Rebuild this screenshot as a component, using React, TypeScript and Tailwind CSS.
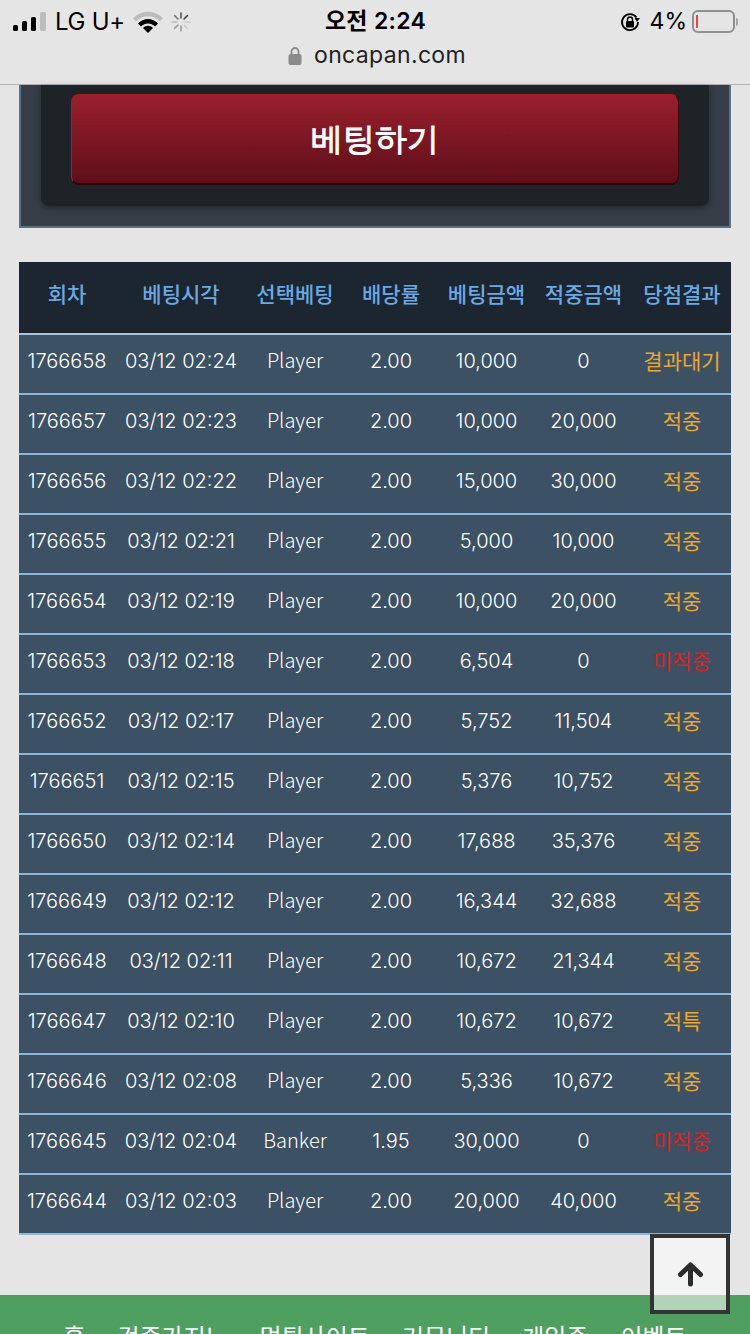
const rows = [
  ['1766658', '03/12 02:24', 'Player', '2.00', '10,000', '0', '결과대기'],
  ['1766657', '03/12 02:23', 'Player', '2.00', '10,000', '20,000', '적중'],
  ['1766656', '03/12 02:22', 'Player', '2.00', '15,000', '30,000', '적중'],
  ['1766655', '03/12 02:21', 'Player', '2.00', '5,000', '10,000', '적중'],
  ['1766654', '03/12 02:19', 'Player', '2.00', '10,000', '20,000', '적중'],
  ['1766653', '03/12 02:18', 'Player', '2.00', '6,504', '0', '미적중'],
  ['1766652', '03/12 02:17', 'Player', '2.00', '5,752', '11,504', '적중'],
  ['1766651', '03/12 02:15', 'Player', '2.00', '5,376', '10,752', '적중'],
  ['1766650', '03/12 02:14', 'Player', '2.00', '17,688', '35,376', '적중'],
  ['1766649', '03/12 02:12', 'Player', '2.00', '16,344', '32,688', '적중'],
  ['1766648', '03/12 02:11', 'Player', '2.00', '10,672', '21,344', '적중'],
  ['1766647', '03/12 02:10', 'Player', '2.00', '10,672', '10,672', '적특'],
  ['1766646', '03/12 02:08', 'Player', '2.00', '5,336', '10,672', '적중'],
  ['1766645', '03/12 02:04', 'Banker', '1.95', '30,000', '0', '미적중'],
  ['1766644', '03/12 02:03', 'Player', '2.00', '20,000', '40,000', '적중'],
];

const headers = ['회차', '베팅시각', '선택베팅', '배당률', '베팅금액', '적중금액', '당첨결과'];

function StatusBar() {
  return (
    <div className="h-[85px] shrink-0 border-b border-[#b3b3b3] bg-[#e5e5e5] font-['Inter','Noto_Sans_CJK_KR',sans-serif] text-black">
      <div className="flex h-[42px] items-center justify-between pl-[13px] pr-[12px] pt-[1px]">
        <div className="flex w-[220px] items-center">
          {/* signal */}
          <svg width="34" height="20" viewBox="0 0 34 20">
            <rect x="0" y="13" width="5" height="6" rx="1.5" fill="#000" />
            <rect x="9" y="9" width="5" height="10" rx="1.5" fill="#000" />
            <rect x="18" y="5" width="5" height="14" rx="1.5" fill="#000" />
            <rect x="27" y="0" width="6" height="19" rx="1.5" fill="#bdbdbd" />
          </svg>
          <span className="ml-[8px] text-[24px] leading-none tracking-[-0.3px]">LG U+</span>
          {/* wifi */}
          <svg className="ml-[8px]" width="30" height="22" viewBox="0 0 30 22">
            <path d="M0 7.500C8-1.500 22-1.500 30 7.500L27 10.500C20.500 3.500 9.500 3.500 3 10.500Z" fill="#bdbdbd" />
            <path d="M5 12.500C10.500 6.500 19.500 6.500 25 12.500L22 15.500C18 11.500 12 11.500 8 15.500Z" fill="#000" />
            <path d="M10 17C13 14 17 14 20 17L15 22Z" fill="#000" />
          </svg>
          {/* spinner */}
          <svg className="ml-[8px]" width="20" height="20" viewBox="0 0 20 20" stroke="#9a9a9a" strokeWidth="1.600" strokeLinecap="round">
            <path d="M10 1V6" stroke="#555" />
            <path d="M16.400 3.600L13 7" stroke="#444" />
            <path d="M19 10H14" stroke="#ccc" />
            <path d="M16.400 16.400L13 13" stroke="#ccc" />
            <path d="M10 19V14" />
            <path d="M3.600 16.400L7 13" />
            <path d="M1 10H6" stroke="#bbb" />
            <path d="M3.600 3.600L7 7" stroke="#777" />
          </svg>
        </div>
        <span className="text-[23px] font-semibold leading-none tracking-[0.3px]">오전 2:24</span>
        <div className="flex w-[220px] items-center justify-end">
          <svg width="22" height="22" viewBox="0 0 22 22" fill="none">
            <path d="M17.500 6.500A8 8 0 1 0 19 11" stroke="#000" strokeWidth="1.800" />
            <path d="M15.500 7H21L18 11Z" fill="#000" />
            <rect x="7" y="10" width="8" height="6.500" rx="1" fill="#000" />
            <path d="M8.500 10V8.500a2.500 2.500 0 0 1 5 0V10" stroke="#000" strokeWidth="1.400" />
          </svg>
          <span className="ml-[9px] text-[23px] leading-none">4%</span>
          {/* battery */}
          <div className="ml-[5px] flex items-center">
            <div className="flex h-[23px] w-[43px] items-center rounded-[6px] border-2 border-[#8f8f8f] pl-[2px]">
              <div className="h-[13px] w-[2px] bg-[#e8483a]" />
            </div>
            <div className="ml-[1px] h-[8px] w-[2px] rounded-r bg-[#a5a5a5]" />
          </div>
        </div>
      </div>
      <div className="flex h-[26px] items-center justify-center pl-[4px]">
        <svg width="14" height="19" viewBox="0 0 14 19" fill="none">
          <path d="M3.500 9V5.500a3.500 3.500 0 0 1 7 0V9" stroke="#8a8a8a" strokeWidth="1.800" />
          <rect x="0.500" y="8" width="13" height="11" rx="2" fill="#8a8a8a" />
        </svg>
        <span className="ml-[12px] text-[23px] leading-none tracking-[0.35px] text-[#222]">oncapan.com</span>
      </div>
    </div>
  );
}

function BetPanel() {
  return (
    <div className="mx-[19px] border-2 border-t-0 border-[#5e7283] bg-[#363d46] px-[20px] pb-[20px]">
      <div className="rounded-b-[8px] bg-[#1e2327] px-[30px] pb-[21px] pt-[9px] shadow-[0_2px_6px_rgba(0,0,0,0.35)]">
        <button className="h-[91px] w-full rounded-[8px] border border-b-2 border-[#a51d1d] border-b-[#2c0408] border-r-[#3a060b] bg-gradient-to-b from-[#9a1f2e] to-[#5f0f1a] pb-[3px] text-[32px] font-bold text-white">
          베팅하기
        </button>
      </div>
    </div>
  );
}

function ResultTable() {
  return (
    <table className="mx-[19px] mt-[34px] w-[712px] table-fixed border-collapse font-['Inter','Noto_Sans_CJK_KR',sans-serif]">
      <colgroup>
        <col className="w-[96px]" />
        <col className="w-[132px]" />
        <col className="w-[96px]" />
        <col className="w-[96px]" />
        <col className="w-[95px]" />
        <col className="w-[99px]" />
        <col className="w-[98px]" />
      </colgroup>
      <thead>
        <tr className="h-[72px] border-b-2 border-[#a9c6dc] bg-[#1c2630]">
          {headers.map((h) => (
            <th key={h} className="p-0 pb-[8px] text-center font-['Noto_Sans_CJK_KR',sans-serif] text-[21px] font-medium text-[#6aaae4]">{h}</th>
          ))}
        </tr>
      </thead>
      <tbody>
        {rows.map((row) => (
          <tr key={row[0]} className="h-[60px] border-b-2 border-[#8ab8d8] bg-[#3d5164]">
            {row.map((cell, i) => {
              // last column is the result, coloured by outcome
              if (i === 6) {
                return (
                  <td key={i} className={`whitespace-nowrap p-0 pb-[7px] text-center font-['Noto_Sans_CJK_KR',sans-serif] text-[21px] font-normal ${cell === '미적중' ? 'text-[#e0201c]' : 'text-[#eca82c]'}`}>
                    {cell}
                  </td>
                );
              }
              if (i === 2) {
                return (
                  <td key={i} className="whitespace-nowrap p-0 pb-[8px] text-center font-['Noto_Sans_CJK_KR',sans-serif] text-[20px] font-light text-white">
                    {cell}
                  </td>
                );
              }
              return (
                <td key={i} className="whitespace-nowrap p-0 pb-[7px] text-center text-[20px] font-light text-white">
                  {cell}
                </td>
              );
            })}
          </tr>
        ))}
      </tbody>
    </table>
  );
}

function FooterNav() {
  return (
    <div className="mt-[60px] flex h-[60px] justify-center gap-[32px] bg-[#4fa060] pt-[25px] font-['Noto_Sans_CJK_KR',sans-serif] text-[24px] leading-[32px] text-white">
      <span>홈</span>
      <span className="mr-[14px] whitespace-nowrap">검증가지!</span>
      <span className="whitespace-nowrap">먹튀사이트</span>
      <span className="whitespace-nowrap">커뮤니티</span>
      <span className="whitespace-nowrap">게임존</span>
      <span className="whitespace-nowrap">이벤트</span>
    </div>
  );
}

export default function App() {
  return (
    <div className="relative flex h-[1334px] w-[750px] flex-col overflow-hidden bg-[#e5e5e5]">
      <StatusBar />
      <BetPanel />
      <ResultTable />
      <FooterNav />
      {/* scroll to top */}
      <button className="absolute left-[650px] top-[1234px] flex h-[80px] w-[80px] items-center justify-center border-[4px] border-[#333] bg-white/55">
        <svg width="27" height="25" viewBox="0 0 27 25" fill="none" stroke="#2b2b2b" strokeWidth="5" strokeLinecap="round" strokeLinejoin="round">
          <path d="M13.500 22V4M3.500 12.500L13.500 3L23.500 12.500" />
        </svg>
      </button>
    </div>
  );
}
